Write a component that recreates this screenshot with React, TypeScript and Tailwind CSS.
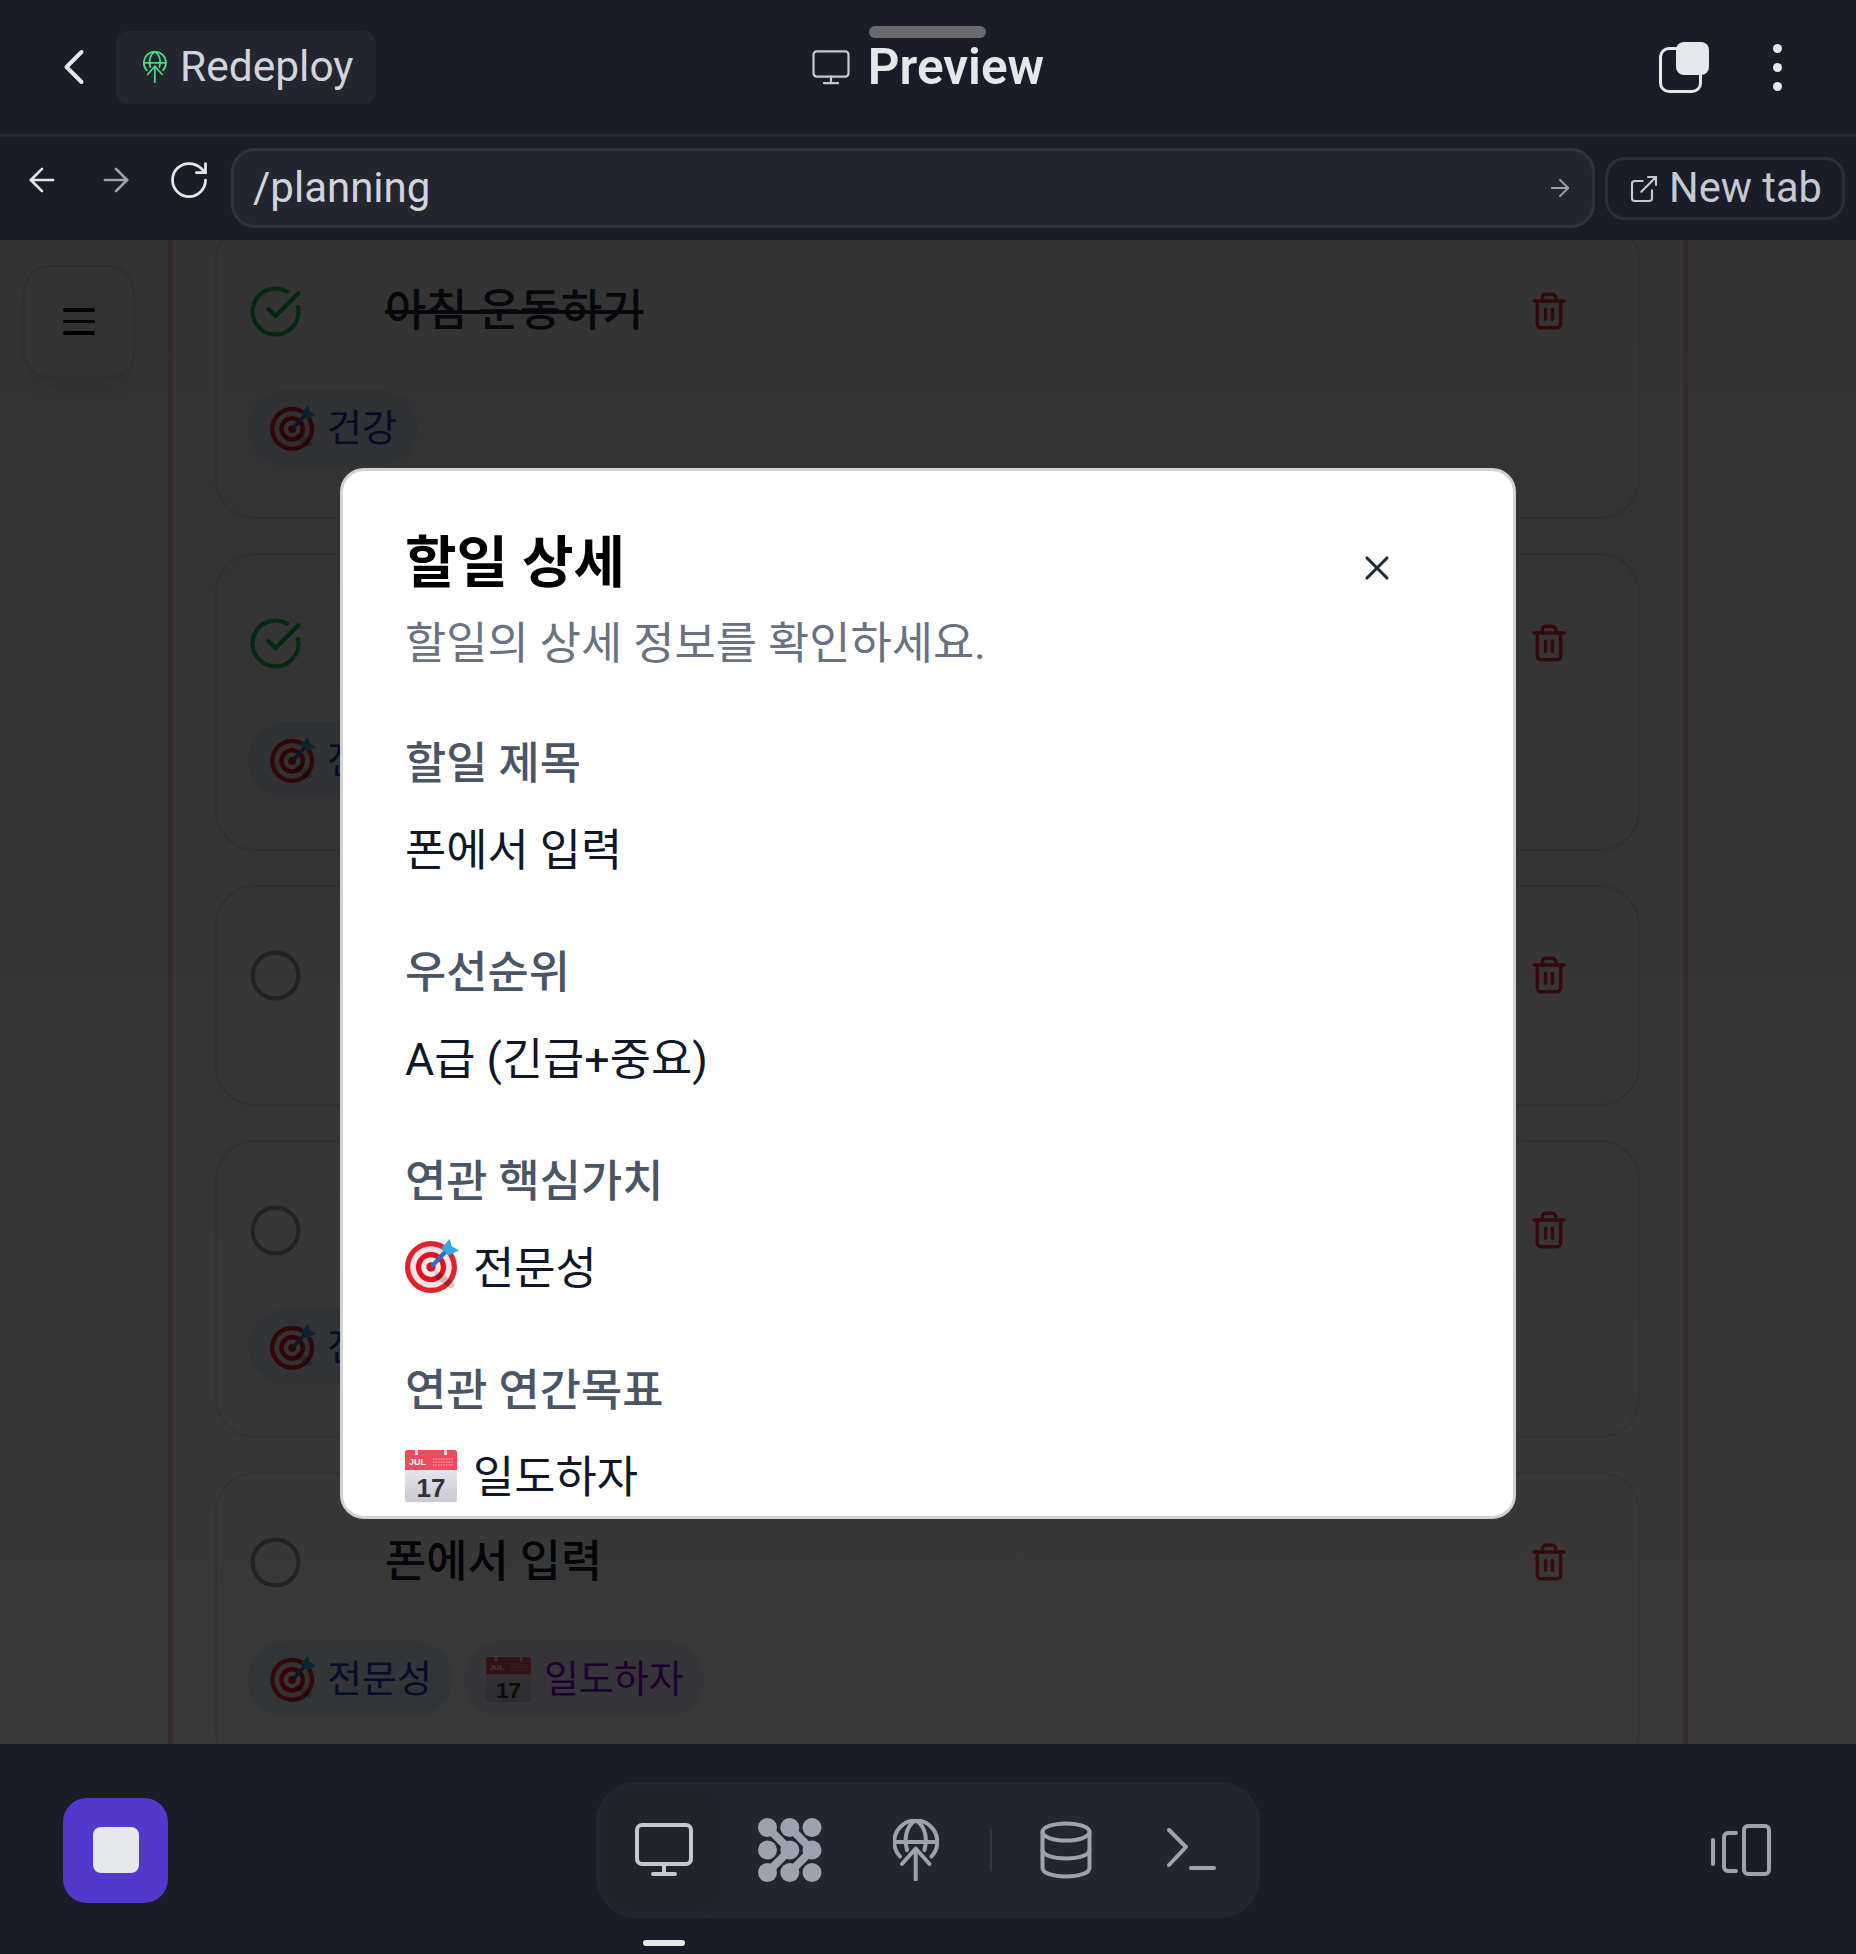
import React from "react";
import { CircleCheckBig, Circle, Trash2, X, ArrowLeft, ArrowRight, RotateCw, ChevronLeft, ExternalLink } from "lucide-react";

function TargetEmoji({ size, className }: { size: number; className?: string }) {
  return (
    <svg width={size} height={size} viewBox="0 0 52 52" className={className}>
      <circle cx="25" cy="27" r="25" fill="#e0202b" />
      <circle cx="25" cy="27" r="20" fill="#fbe3e5" />
      <circle cx="25" cy="27" r="14.5" fill="#e3101e" />
      <circle cx="25" cy="27" r="9.5" fill="#fdeeee" />
      <circle cx="25" cy="27" r="4.5" fill="#d8131f" />
      <path d="M32 35 L44 44" stroke="#000" strokeOpacity="0.2" strokeWidth="7" strokeLinecap="round" />
      <path d="M27 25 L41 10" stroke="#2b6fc4" strokeWidth="4" strokeLinecap="round" />
      <path d="M35 9 L43 0 L45 7 L52 11 L42 16 Z" fill="#35a7e0" />
    </svg>
  );
}

function CalendarEmoji({ size, className }: { size: number; className?: string }) {
  return (
    <svg width={size} height={size} viewBox="0 0 52 52" className={className}>
      <defs>
        <linearGradient id="calendarPage" x1="0" y1="0" x2="0" y2="1">
          <stop offset="0" stopColor="#f6f6fa" />
          <stop offset="1" stopColor="#c9c9d6" />
        </linearGradient>
      </defs>
      <rect x="0" y="0" width="52" height="52" rx="2.5" fill="url(#calendarPage)" />
      <path d="M0 2.5 A2.5 2.5 0 0 1 2.5 0 H49.5 A2.5 2.5 0 0 1 52 2.5 V20 H0 Z" fill="#f2495c" />
      <rect x="10" y="0" width="3" height="5" fill="#fbd5da" />
      <rect x="39" y="0" width="3" height="5" fill="#fbd5da" />
      <text x="4" y="15" fontSize="9" fontWeight="700" fill="#fff" fontFamily="Liberation Sans, sans-serif">JUL</text>
      <path d="M28 9 H48 M28 12 H48 M28 15 H48" stroke="#fbc4cb" strokeWidth="1.2" strokeDasharray="1.4 1.2" />
      <text x="26" y="47" textAnchor="middle" fontSize="26" fontWeight="700" fill="#333" fontFamily="Liberation Sans, sans-serif">17</text>
    </svg>
  );
}

function DeployIcon({ width, height, color, sw }: { width: number; height: number; color: string; sw: number }) {
  return (
    <svg width={width} height={height} viewBox="0 0 46 62" fill="none" stroke={color} strokeWidth={sw} strokeLinecap="round" strokeLinejoin="round">
      <path d="M7 37.5 A21.5 21.5 0 1 1 38.5 37.5" />
      <path d="M14 31 C10.5 18 14 6 22.7 1.5 C31.5 6 35 18 31.5 31" />
      <path d="M1.5 23 H44" />
      <path d="M22.7 60.5 V30" />
      <path d="M9 45 L22.7 29.5 L36.5 45" />
    </svg>
  );
}

function MonitorIcon({ width, height, color, sw }: { width: number; height: number; color: string; sw: number }) {
  return (
    <svg width={width} height={height} viewBox="0 0 58 54" fill="none" stroke={color} strokeWidth={sw} strokeLinecap="round" strokeLinejoin="round">
      <rect x="2" y="2" width="54" height="39" rx="5" />
      <path d="M29 41 V51 M18 51 H40" />
    </svg>
  );
}

function SwarmIcon() {
  const c = "#9ca3af";
  const xs = [9.5, 31.8, 54];
  const ys = [9.5, 32, 54.5];
  return (
    <svg width="64" height="64" viewBox="0 0 64 64" fill={c}>
      {xs.flatMap((x) => ys.map((y) => <circle key={`${x}-${y}`} cx={x} cy={y} r="9.5" />))}
      <g fill="none" stroke={c} strokeWidth="8">
        <path d="M9.5 9.5 L31.8 32 L9.5 54.5" />
        <path d="M31.8 9.5 L54 32 L31.8 54.5" />
      </g>
    </svg>
  );
}

function DbIcon() {
  return (
    <svg width="52" height="58" viewBox="0 0 52 58" fill="none" stroke="#9ca3af" strokeWidth="4" strokeLinecap="round">
      <ellipse cx="26" cy="11" rx="23.5" ry="8.5" />
      <path d="M2.5 11 V47 C2.5 52 13 55.5 26 55.5 C39 55.5 49.5 52 49.5 47 V11" />
      <path d="M2.5 29 C2.5 34 13 37.5 26 37.5 C39 37.5 49.5 34 49.5 29" />
    </svg>
  );
}

function TerminalIcon() {
  return (
    <svg width="50" height="44" viewBox="0 0 50 44" fill="none" stroke="#9ca3af" strokeWidth="4" strokeLinecap="round" strokeLinejoin="round">
      <path d="M2 2 L19 19 L2 37" />
      <path d="M24 40 H47" />
    </svg>
  );
}

function PanelIcon() {
  return (
    <svg width="60" height="52" viewBox="0 0 60 52" fill="none" stroke="#9ca3af" strokeWidth="4" strokeLinecap="round" strokeLinejoin="round">
      <path d="M2 16 V40" />
      <path d="M25 9 H17 A4 4 0 0 0 13 13 V43 A4 4 0 0 0 17 47 H25" />
      <rect x="33" y="2" width="25" height="48" rx="4" />
    </svg>
  );
}

function Pill({ kind, label }: { kind: "value" | "goal"; label: string }) {
  const isValue = kind === "value";
  return (
    <div
      className={
        isValue
          ? "flex h-[76px] items-center gap-[11px] rounded-full bg-[#e6f0fe] pl-[22px] pr-[21px] text-[38px] text-blue-800"
          : "flex h-[76px] items-center gap-[13px] rounded-full bg-[#f6eeff] pl-[22px] pr-[20px] text-[38px] text-purple-700"
      }
    >
      {isValue ? <TargetEmoji size={46} className="shrink-0" /> : <CalendarEmoji size={45} className="shrink-0" />}
      <span>{label}</span>
    </div>
  );
}

type Task = { done: boolean; title: string; pills: { kind: "value" | "goal"; label: string }[] };

const tasks: Task[] = [
  { done: true, title: "아침 운동하기", pills: [{ kind: "value", label: "건강" }] },
  { done: true, title: "", pills: [{ kind: "value", label: "전문성" }] },
  { done: false, title: "", pills: [] },
  { done: false, title: "", pills: [{ kind: "value", label: "전문성" }] },
  { done: false, title: "폰에서 입력", pills: [{ kind: "value", label: "전문성" }, { kind: "goal", label: "일도하자" }] },
];

function TaskCard({ task }: { task: Task }) {
  return (
    <div className={task.pills.length ? "shrink-0 rounded-[40px] border-2 border-gray-200 bg-white pb-[51px] pl-[33px] pr-[69px] pt-[60px]" : "shrink-0 rounded-[40px] border-2 border-gray-200 bg-white pb-[101px] pl-[33px] pr-[69px] pt-[60px]"}>
      <div className="flex h-[56px] items-center">
        {task.done ? (
          <CircleCheckBig size={55} strokeWidth={1.8} className="-ml-[2px] shrink-0 text-green-500" />
        ) : (
          <Circle size={55} strokeWidth={1.8} className="-ml-[2px] shrink-0 text-gray-400" />
        )}
        <span className={task.done ? "ml-[82px] flex-1 text-[44.8px] font-medium text-gray-800 line-through" : "ml-[82px] flex-1 text-[44.8px] font-medium text-gray-900"}>{task.title}</span>
        <Trash2 size={40} strokeWidth={2.1} className="shrink-0 text-red-500" />
      </div>
      {task.pills.length > 0 && (
        <div className="-ml-[2px] mt-[51px] flex gap-[11px]">
          {task.pills.map((p) => (
            <Pill key={p.label} kind={p.kind} label={p.label} />
          ))}
        </div>
      )}
    </div>
  );
}

function Field({ label, children }: { label: string; children: React.ReactNode }) {
  return (
    <div className="mb-[55px]">
      <div className="mb-[20px] text-[44.8px] font-medium leading-[67px] text-gray-600">{label}</div>
      <div className="flex h-[67px] items-center text-[44.8px] leading-[67px] text-gray-900">{children}</div>
    </div>
  );
}

export default function App() {
  return (
    <div className="flex h-[1954px] w-[1856px] flex-col overflow-hidden bg-[#1a1d27] font-['Roboto','Noto_Sans_CJK_KR',sans-serif]">
      {/* Top header */}
      <header className="relative grid h-[137px] shrink-0 grid-cols-[1fr_auto_1fr] items-center border-b-[3px] border-[#252832]">
        <div className="absolute left-[869px] top-[26px] h-[12px] w-[117px] rounded-full bg-[#6b6b6f]" />
        <div className="flex items-center pl-[44px]">
          <ChevronLeft size={60} strokeWidth={1.6} className="text-[#e5e7eb]" />
          <div className="ml-[12px] flex h-[73px] w-[260px] items-center gap-[13px] rounded-[12px] bg-[#23262f] pl-[27px] text-[42.5px] text-[#d1d5db]">
            <DeployIcon width={24} height={32} color="#4ade80" sw={3.4} />
            <span>Redeploy</span>
          </div>
        </div>
        <div className="flex items-center gap-[18px]">
          <MonitorIcon width={38} height={35} color="#c5c8cf" sw={3.4} />
          <span className="mt-[1px] text-[49.5px] font-semibold text-[#e5e7eb]">Preview</span>
        </div>
        <div className="flex items-center justify-end pr-[74px]">
          <div className="relative mr-[64px] h-[51px] w-[50px]">
            <div className="absolute bottom-0 left-0 h-[46px] w-[43px] rounded-[10px] border-[3px] border-[#e5e7eb]" />
            <div className="absolute right-0 top-0 h-[33px] w-[33px] rounded-[8px] bg-[#e5e7eb]" />
          </div>
          <div className="flex flex-col gap-[10px]">
            <div className="h-[9px] w-[9px] rounded-full bg-[#e5e7eb]" />
            <div className="h-[9px] w-[9px] rounded-full bg-[#e5e7eb]" />
            <div className="h-[9px] w-[9px] rounded-full bg-[#e5e7eb]" />
          </div>
        </div>
      </header>

      {/* Address row */}
      <div className="flex h-[103px] shrink-0 items-center pb-[2px]">
        <ArrowLeft size={38} strokeWidth={1.7} className="ml-[23px] -mt-[16px] shrink-0 text-[#e5e7eb]" />
        <ArrowRight size={38} strokeWidth={1.7} className="ml-[36px] -mt-[16px] shrink-0 text-[#9ca3af]" />
        <RotateCw size={44} strokeWidth={1.5} className="ml-[32px] -mt-[16px] shrink-0 text-[#e5e7eb]" />
        <div className="ml-[20px] flex h-[80px] flex-1 items-center justify-between rounded-[24px] border-[3px] border-[#2f3240] bg-[#23262f] pl-[19px] pr-[18px] text-[42px] text-[#d1d5db]">
          <span>/planning</span>
          <ArrowRight size={28} strokeWidth={1.6} className="text-[#9ca3af]" />
        </div>
        <div className="ml-[10px] mr-[11px] mt-[2px] flex h-[63px] w-[240px] shrink-0 items-center gap-[9px] rounded-[20px] border-[3px] border-[#2b2e3a] pl-[20px] text-[41.6px] text-[#c5c8d0]">
          <ExternalLink size={32} strokeWidth={1.6} />
          <span>New tab</span>
        </div>
      </div>

      {/* Page behind the dialog */}
      <main className="relative flex flex-1 overflow-hidden bg-white">
        <div className="w-[168px] shrink-0 pl-[23px] pt-[25px]">
          <div className="flex h-[113px] w-[112px] items-center justify-center rounded-[28px] border-2 border-gray-200 bg-white shadow-lg">
            <div className="flex w-[32px] flex-col gap-[8px]">
              <div className="h-[3.5px] rounded-full bg-gray-950" />
              <div className="h-[3.5px] rounded-full bg-gray-950" />
              <div className="h-[3.5px] rounded-full bg-gray-950" />
            </div>
          </div>
        </div>
        <div className="flex w-[1520px] shrink-0 flex-col gap-[34px] border-x-[5px] border-red-200 pl-[42px] pr-[43px]">
          <div className="-mt-[53px]" />
          {tasks.map((t, i) => (
            <TaskCard key={i} task={t} />
          ))}
        </div>

        {/* Dimming layer and dialog */}
        <div className="absolute inset-0 flex justify-center bg-gradient-to-b from-black/80 to-black/78 pt-[228px]">
          <div className="relative h-[1051px] w-[1176px] overflow-hidden rounded-[24px] border-[3px] border-[#d2d2d2] bg-white px-[62px] pt-[50px]">
            <X size={40} strokeWidth={1.9} className="absolute right-[116px] top-[77px] text-gray-800" />
            <h2 className="text-[56px] font-bold leading-[84px] text-black">할일 상세</h2>
            <p className="mt-[5px] text-[44.8px] leading-[67px] text-gray-500">할일의 상세 정보를 확인하세요.</p>
            <div className="mt-[53px]">
              <Field label="할일 제목">폰에서 입력</Field>
              <Field label="우선순위">A급 (긴급+중요)</Field>
              <Field label="연관 핵심가치">
                <span className="flex items-center gap-[14px]">
                  <TargetEmoji size={54} className="-mt-[6px] shrink-0" />
                  전문성
                </span>
              </Field>
              <Field label="연관 연간목표">
                <span className="flex items-center gap-[16px]">
                  <CalendarEmoji size={52} className="-mt-[4px] shrink-0" />
                  일도하자
                </span>
              </Field>
            </div>
          </div>
        </div>
      </main>

      {/* Bottom bar */}
      <footer className="grid h-[210px] shrink-0 grid-cols-[1fr_auto_1fr] items-center pt-[2px]">
        <div className="pl-[63px]">
          <div className="flex h-[105px] w-[105px] items-center justify-center rounded-[24px] bg-[#5239cc]">
            <div className="h-[46px] w-[46px] rounded-[8px] bg-[#e5e7eb]" />
          </div>
        </div>
        <div className="relative flex h-[136px] items-center gap-[22px] rounded-[40px] bg-[#23262f] px-[16px]">
          <div className="relative flex h-[108px] w-[104px] items-center justify-center rounded-[14px] bg-[#22242c] shadow-[0_0_14px_rgba(0,0,0,0.12)]">
            <MonitorIcon width={58} height={54} color="#c5c8cf" sw={4} />
            <div className="absolute -bottom-[42px] left-[31px] h-[6px] w-[42px] rounded-full bg-[#e5e7eb]" />
          </div>
          <div className="flex h-[108px] w-[104px] items-center justify-center">
            <SwarmIcon />
          </div>
          <div className="flex h-[108px] w-[104px] items-center justify-center">
            <DeployIcon width={46} height={62} color="#9ca3af" sw={4} />
          </div>
          <div className="h-[42px] w-[2px] bg-[#343743]" />
          <div className="flex h-[108px] w-[104px] items-center justify-center">
            <DbIcon />
          </div>
          <div className="flex h-[108px] w-[104px] items-center justify-center">
            <TerminalIcon />
          </div>
        </div>
        <div className="flex justify-end pr-[85px]">
          <PanelIcon />
        </div>
      </footer>
    </div>
  );
}
